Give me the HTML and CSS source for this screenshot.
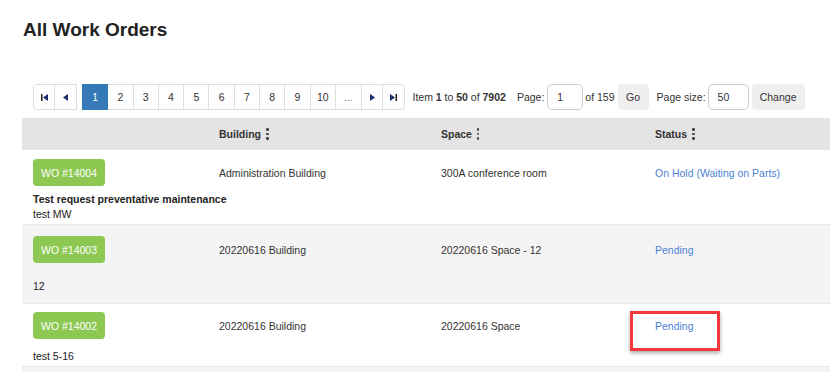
FILE: index.html
```html
<!DOCTYPE html>
<html>
<head>
<meta charset="utf-8">
<link rel="stylesheet" href="styles.css">
</head>
<body>
<div class="page">
  <h1 class="title">All Work Orders</h1>
  <div class="toolbar">
    <div class="pager">
      <div class="pg-group">
        <span class="pg-btn pg-icon pg-first"><svg width="7" height="7" viewBox="0 0 7 7"><rect x="0" y="0" width="1.5" height="7" fill="#222"/><path d="M7 0 L2 3.5 L7 7 Z" fill="#1d2d6b"/></svg></span>
        <span class="pg-btn pg-icon pg-last-of-group"><svg width="5" height="7" viewBox="0 0 5 7"><path d="M5 0 L0 3.5 L5 7 Z" fill="#1d2d6b"/></svg></span>
      </div>
      <div class="pg-group pg-main">
        <span class="pg-btn pg-num active">1</span>
        <span class="pg-btn pg-num">2</span>
        <span class="pg-btn pg-num">3</span>
        <span class="pg-btn pg-num">4</span>
        <span class="pg-btn pg-num">5</span>
        <span class="pg-btn pg-num">6</span>
        <span class="pg-btn pg-num">7</span>
        <span class="pg-btn pg-num">8</span>
        <span class="pg-btn pg-num">9</span>
        <span class="pg-btn pg-num">10</span>
        <span class="pg-btn pg-more">...</span>
        <span class="pg-btn pg-icon pg-next"><svg width="5" height="7" viewBox="0 0 5 7"><path d="M0 0 L5 3.5 L0 7 Z" fill="#1d2d6b"/></svg></span>
        <span class="pg-btn pg-icon pg-end"><svg width="7" height="7" viewBox="0 0 7 7"><path d="M0 0 L5 3.5 L0 7 Z" fill="#1d2d6b"/><rect x="5.5" y="0" width="1.5" height="7" fill="#222"/></svg></span>
      </div>
    </div>
    <span class="info">Item <b>1</b> to <b>50</b> of <b>7902</b></span>
    <span class="lbl lbl-page">Page:</span>
    <span class="inp inp-page">1</span>
    <span class="lbl lbl-of">of 159</span>
    <span class="btn btn-go">Go</span>
    <span class="lbl lbl-size">Page size:</span>
    <span class="inp inp-size">50</span>
    <span class="btn btn-change">Change</span>
  </div>

  <div class="table">
    <div class="thead">
      <div class="th"></div>
      <div class="th">Building <span class="kebab"><i></i><i></i><i></i></span></div>
      <div class="th">Space <span class="kebab"><i></i><i></i><i></i></span></div>
      <div class="th">Status <span class="kebab"><i></i><i></i><i></i></span></div>
    </div>

    <div class="row row-a">
      <div class="cells">
        <div class="cell"><span class="badge">WO #14004</span></div>
        <div class="cell">Administration Building</div>
        <div class="cell">300A conference room</div>
        <div class="cell status">On Hold (Waiting on Parts)</div>
      </div>
      <div class="desc">
        <div class="desc-title">Test request preventative maintenance</div>
        <div>test MW</div>
      </div>
    </div>

    <div class="row row-b alt">
      <div class="cells">
        <div class="cell"><span class="badge">WO #14003</span></div>
        <div class="cell">20220616 Building</div>
        <div class="cell">20220616 Space - 12</div>
        <div class="cell status">Pending</div>
      </div>
      <div class="desc">
        <div>12</div>
      </div>
    </div>

    <div class="row row-c">
      <div class="cells">
        <div class="cell"><span class="badge">WO #14002</span></div>
        <div class="cell">20220616 Building</div>
        <div class="cell">20220616 Space</div>
        <div class="cell status status-marked">Pending<span class="highlight"></span></div>
      </div>
      <div class="desc">
        <div>test 5-16</div>
      </div>
    </div>

    <div class="row row-d alt"></div>
  </div>
</div>
</body>
</html>
```

FILE: styles.css
```css
html, body {
  margin: 0;
  padding: 0;
  background: #fff;
  overflow: hidden;
}
body {
  font-family: "Liberation Sans", Arial, sans-serif;
  font-size: 10.5px;
  color: #333;
  width: 830px;
  height: 372px;
}
.page {
  padding-left: 22px;
}
.title {
  margin: 19px 0 0 1px;
  font-size: 19px;
  line-height: 22px;
  font-weight: bold;
  color: #222;
}
.toolbar {
  margin-top: 43px;
  margin-bottom: 8px;
  padding-left: 11px;
  display: flex;
  align-items: center;
  height: 26px;
}
.pager {
  display: flex;
  height: 26px;
}
.pg-group {
  display: flex;
  height: 26px;
}
.pg-main {
  margin-left: 5px;
}
.pg-btn {
  box-sizing: border-box;
  height: 26px;
  display: flex;
  align-items: center;
  justify-content: center;
  border: 1px solid #ddd;
  margin-left: -1px;
  background: #fff;
  color: #333;
  font-size: 10.5px;
}
.pg-group .pg-btn:first-child {
  margin-left: 0;
}
.pg-first {
  width: 22px;
  border-radius: 4px 0 0 4px;
}
.pg-last-of-group {
  width: 23px;
}
.pg-num {
  width: 26.3px;
}
.pg-num.active {
  background: #337ab7;
  border-color: #337ab7;
  color: #fff;
  position: relative;
  z-index: 1;
}
.pg-more {
  width: 27px;
  color: #777;
}
.pg-next {
  width: 22.5px;
}
.pg-end {
  width: 23px;
  border-radius: 0 4px 4px 0;
}
.info {
  margin-left: 7px;
  color: #333;
}
.info b {
  font-weight: bold;
}
.lbl-page {
  margin-left: 11px;
}
.inp {
  box-sizing: border-box;
  height: 26px;
  border: 1px solid #ccc;
  border-radius: 5px;
  display: flex;
  align-items: center;
  padding-left: 9px;
  color: #333;
}
.inp-page {
  width: 36px;
  margin-left: 3px;
}
.lbl-of {
  margin-left: 2px;
}
.btn {
  box-sizing: border-box;
  height: 26px;
  background: #efefef;
  border-radius: 4px;
  display: flex;
  align-items: center;
  justify-content: center;
  color: #333;
}
.btn-go {
  width: 31px;
  margin-left: 3px;
}
.lbl-size {
  margin-left: 8px;
}
.inp-size {
  width: 41px;
  margin-left: 2px;
}
.btn-change {
  width: 53px;
  margin-left: 3px;
}

.table {
  width: 830px;
}
.thead {
  display: grid;
  grid-template-columns: 186px 222px 214px 1fr;
  height: 32px;
  background: #e4e4e4;
  align-items: center;
}
.th {
  padding-left: 11px;
  font-weight: bold;
  color: #333;
  display: flex;
  align-items: center;
}
.kebab {
  display: inline-flex;
  flex-direction: column;
  gap: 2px;
  margin-left: 5px;
}
.kebab i {
  display: block;
  width: 2.5px;
  height: 2.5px;
  background: #444;
  border-radius: 50%;
}
.row {
  border-bottom: 1px solid #e9e9e9;
  background: #fff;
}
.row.alt {
  background: #f4f4f4;
}
.cells {
  display: grid;
  grid-template-columns: 186px 222px 214px 1fr;
  align-items: center;
}
.cell {
  padding-left: 11px;
  position: relative;
}
.badge {
  display: inline-flex;
  align-items: center;
  justify-content: center;
  width: 72px;
  height: 27px;
  background: #8dc853;
  color: #fff;
  border-radius: 4px;
  font-size: 10.5px;
}
.status {
  color: #4e7fd6;
}
.desc {
  padding-left: 11px;
  line-height: 15px;
  color: #222;
}
.desc-title {
  font-weight: bold;
}
.row-a .cells {
  padding-top: 9px;
}
.row-a .desc {
  padding-top: 6px;
  padding-bottom: 2px;
}
.row-b .cells {
  padding-top: 11px;
}
.row-b .desc {
  padding-top: 15.5px;
  padding-bottom: 9.5px;
}
.row-c .cells {
  padding-top: 8px;
}
.row-c .desc {
  padding-top: 9.5px;
  padding-bottom: 2.5px;
}
.row-d {
  height: 20px;
  border-bottom: 0;
}
.highlight {
  position: absolute;
  left: -14px;
  top: -9px;
  width: 90px;
  height: 40px;
  box-sizing: border-box;
  border: 3px solid #f2383b;
  box-shadow: 0 2px 4px rgba(0, 0, 0, 0.35);
}
```
